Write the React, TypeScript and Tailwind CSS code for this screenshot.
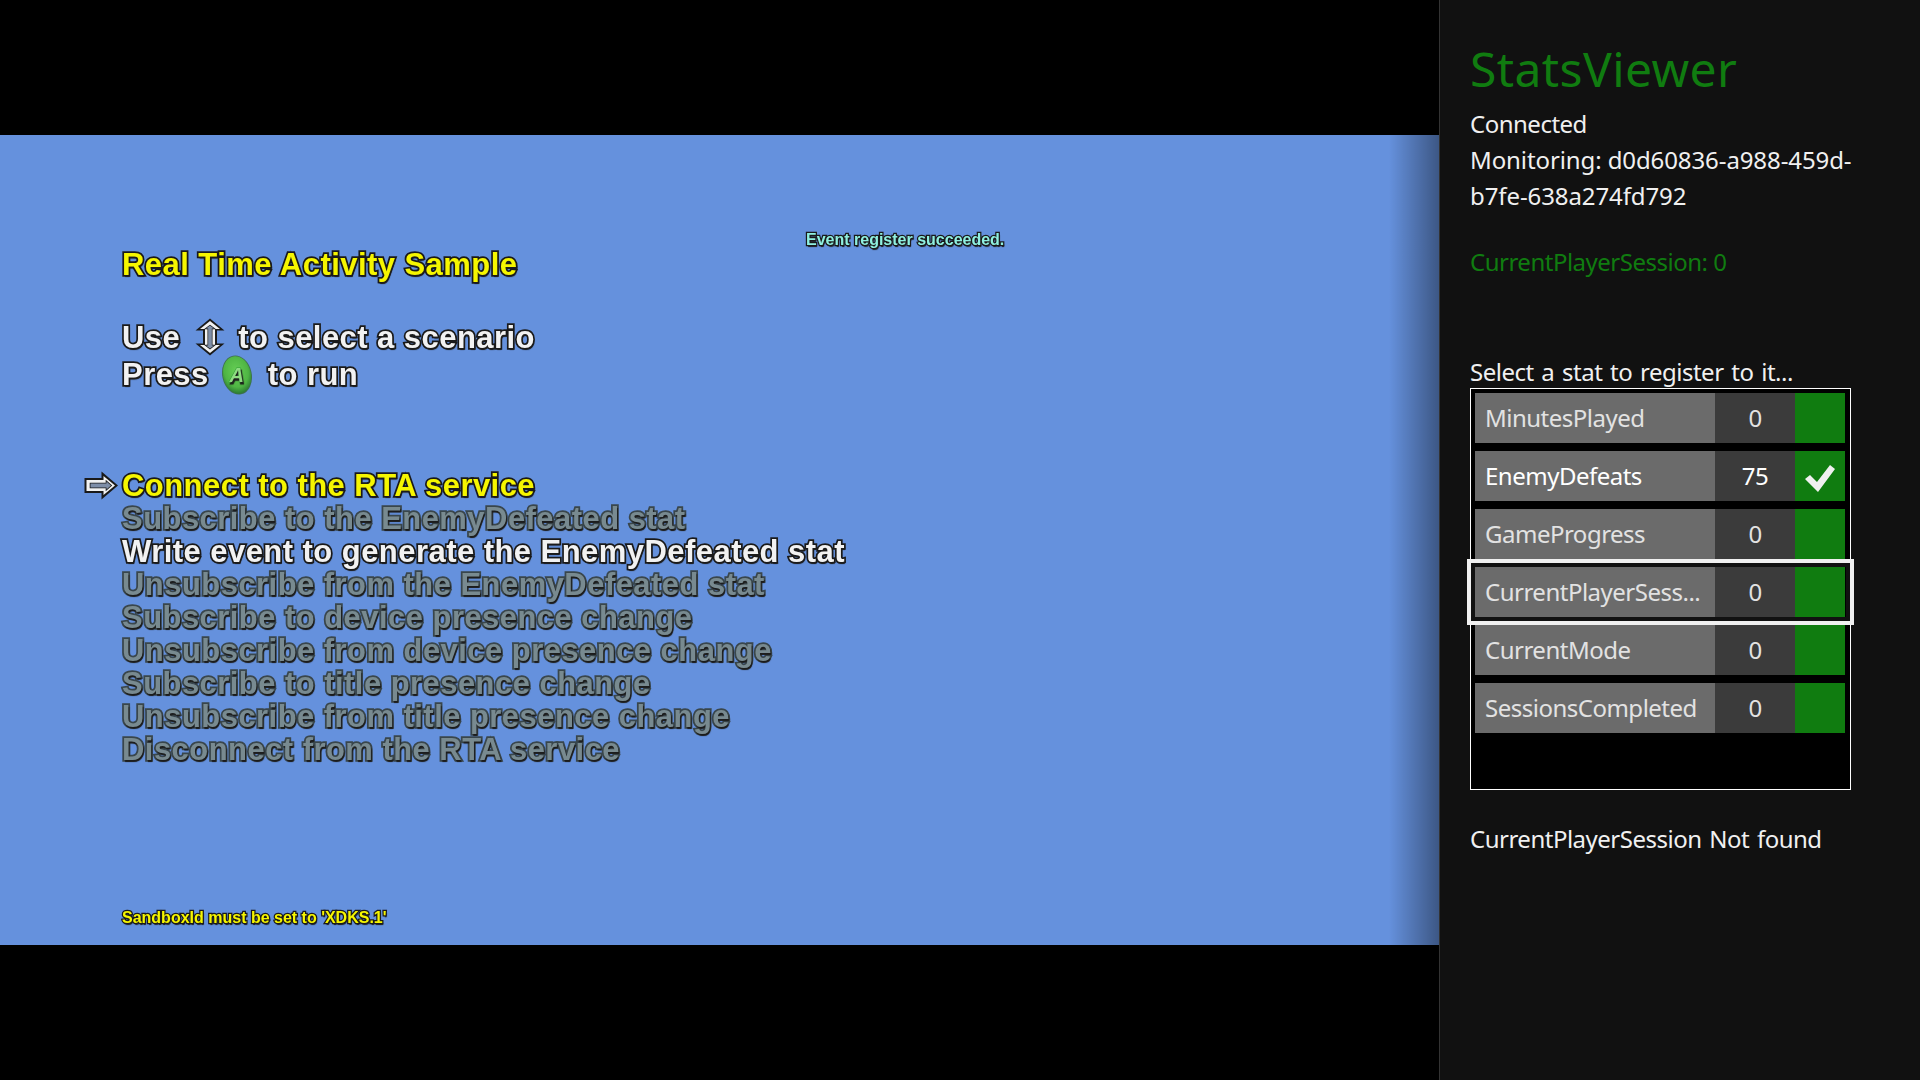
const outlined =
  "font-['Liberation_Sans',Arial,sans-serif] font-bold whitespace-nowrap tracking-[0.45px] [paint-order:stroke_fill] [text-shadow:1px_2px_1px_#1c1c1c]";
const bright = "[-webkit-text-stroke:3.5px_#1a1a1a]";
const dimmed = "text-[#788a90] [-webkit-text-stroke:3.5px_#39464c]";

const menuItems = [
  { label: "Connect to the RTA service", tone: `text-[#f6f600] ${bright} tracking-[0.6px]`, pointer: true },
  { label: "Subscribe to the EnemyDefeated stat", tone: dimmed },
  { label: "Write event to generate the EnemyDefeated stat", tone: `text-[#f2f2f2] ${bright}` },
  { label: "Unsubscribe from the EnemyDefeated stat", tone: dimmed },
  { label: "Subscribe to device presence change", tone: dimmed },
  { label: "Unsubscribe from device presence change", tone: dimmed },
  { label: "Subscribe to title presence change", tone: dimmed },
  { label: "Unsubscribe from title presence change", tone: dimmed },
  { label: "Disconnect from the RTA service", tone: dimmed },
];

const stats = [
  { name: "MinutesPlayed", value: "0" },
  { name: "EnemyDefeats", value: "75", registered: true },
  { name: "GameProgress", value: "0" },
  { name: "CurrentPlayerSess...", value: "0", focused: true },
  { name: "CurrentMode", value: "0" },
  { name: "SessionsCompleted", value: "0" },
];

const PointerArrow = () => (
  <svg width="35" height="29" viewBox="0 0 35 29" className="shrink-0">
    <path d="M0.5 7 H17.5 V0.5 L34 14.5 L17.5 28.5 V22 H0.5 Z" fill="#1a1a1a" />
    <path d="M2.5 9 H19.5 V5 L31 14.5 L19.5 24 V20 H2.5 Z" fill="#f2f2f2" />
    <path d="M6.5 12.5 H22.5 V10.5 L27 14.5 L22.5 18.5 V16.5 H6.5 Z" fill="#7e8ea8" stroke="#1a1a1a" strokeWidth="1.6" />
  </svg>
);

const UpDownArrow = () => (
  <svg width="30" height="38" viewBox="0 0 30 38" className="shrink-0">
    <path d="M15 0.5 L29.5 12.5 H22 V25.5 H29.5 L15 37.5 L0.5 25.5 H8 V12.5 H0.5 Z" fill="#1a1a1a" />
    <path d="M15 3 L25 11 H20 V27 H25 L15 35 L5 27 H10 V11 H5 Z" fill="#f2f2f2" />
    <path d="M15 7.5 L19 10.5 H16.8 V27.5 H19 L15 30.5 L11 27.5 H13.2 V10.5 H11 Z" fill="#7e8ea8" stroke="#1a1a1a" strokeWidth="1.4" />
  </svg>
);

const AButton = () => (
  <svg width="32" height="40" viewBox="0 0 32 40" className="shrink-0">
    <defs>
      <radialGradient id="a-button" cx="50%" cy="40%" r="60%">
        <stop offset="0%" stopColor="#66cf55" />
        <stop offset="70%" stopColor="#4fb544" />
        <stop offset="100%" stopColor="#2c7a32" />
      </radialGradient>
    </defs>
    <ellipse cx="16" cy="20" rx="14" ry="19" transform="rotate(-12 16 20)" fill="url(#a-button)" stroke="#3f6f52" strokeWidth="1.5" />
    <text x="16" y="27" textAnchor="middle" fontSize="20" fontStyle="italic" fontWeight="700" fill="#8fdc82" stroke="#2f9a37" strokeWidth="1" fontFamily="Liberation Sans">
      A
    </text>
  </svg>
);

const CheckMark = () => (
  <svg width="50" height="50" viewBox="0 0 50 50">
    <polygon points="10,28 15,24 22,31 35,14 40,18 23,41" fill="#f0f0f0" />
  </svg>
);

function GameView() {
  return (
    <div className="relative h-[810px] overflow-hidden bg-[#6591dd] pl-[122px] pt-[113px] text-[31px] leading-[33px] blur-[0.5px]">
      <div className={`${outlined} absolute left-[806px] top-[96px] text-[16px] leading-[18px] tracking-normal text-[#8ff0e0] [-webkit-text-stroke:2.5px_#1a1a1a]`}>
        Event register succeeded.
      </div>

      <div className={`${outlined} ${bright} tracking-[0.25px] text-[#f6f600]`}>Real Time Activity Sample</div>

      <div className={`${outlined} ${bright} mt-[38px] flex h-[37px] items-center text-[#f2f2f2]`}>
        <span>Use</span>
        <span className="ml-[15px] mr-[13px] -translate-y-px"><UpDownArrow /></span>
        <span>to select a scenario</span>
      </div>
      <div className={`${outlined} ${bright} flex h-[37px] items-center text-[#f2f2f2]`}>
        <span>Press</span>
        <span className="ml-[12px] mr-[15px]"><AButton /></span>
        <span>to run</span>
      </div>

      <div className="mt-[76px]">
        {menuItems.map((item) => (
          <div key={item.label} className={`${outlined} ${item.tone} relative`}>
            {item.pointer && (
              <span className="absolute left-[-38px] top-[2px]"><PointerArrow /></span>
            )}
            {item.label}
          </div>
        ))}
      </div>

      <div className={`${outlined} mt-[143px] text-[16px] leading-[18px] tracking-normal text-[#f6f600] [-webkit-text-stroke:2.5px_#1a1a1a]`}>
        SandboxId must be set to 'XDKS.1'
      </div>

      <div className="absolute inset-y-0 right-0 w-[50px] bg-gradient-to-r from-transparent to-black/40" />
    </div>
  );
}

function StatRow({ name, value, registered, focused }: { name: string; value: string; registered?: boolean; focused?: boolean }) {
  return (
    <div
      className={`flex h-[50px] text-[24px] ${registered ? "text-white" : "text-[#e2e2e2]"} ${
        focused ? "relative z-10 shadow-[0_0_0_4px_#111111,0_0_0_8px_#f0f0f0]" : ""
      }`}
    >
      <div className="flex w-[240px] items-center bg-[#6b6b6b] pb-[1px] pl-[10px] whitespace-nowrap">{name}</div>
      <div className="flex w-[80px] items-center justify-center bg-[#3b3b3b] pb-[1px]">{value}</div>
      <div className="flex w-[50px] items-center justify-center bg-[#107c10]">
        {registered && <CheckMark />}
      </div>
    </div>
  );
}

export default function App() {
  return (
    <div className="flex h-[1080px] w-[1920px] overflow-hidden bg-black font-['Noto_Sans','Open_Sans',sans-serif]">
      <div className="flex w-[1439px] flex-col justify-center">
        <GameView />
      </div>

      <aside className="w-[481px] border-l border-[#333333] bg-[#111111] pl-[30px] text-[24px] leading-[36px] tracking-[-0.5px] [word-spacing:2px] text-[#f0f0f0]">
        <h1 className="mt-[36px] text-[48px] leading-[66px] tracking-[0.4px] text-[#107c10]">StatsViewer</h1>
        <p className="mt-[4px]">Connected</p>
        <p className="w-[400px] tracking-[-0.1px] [word-spacing:0]">Monitoring: d0d60836-a988-459d-b7fe-638a274fd792</p>
        <p className="mt-[30px] text-[#107c10] [word-spacing:0]">CurrentPlayerSession: 0</p>

        <p className="mt-[74px]">Select a stat to register to it...</p>
        <div className="-mt-[2px] h-[402px] w-[381px] border border-white bg-black p-[4px]">
          <div className="flex flex-col gap-[8px] [word-spacing:0]">
            {stats.map((stat) => (
              <StatRow key={stat.name} {...stat} />
            ))}
          </div>
        </div>
        <p className="mt-[31px]">CurrentPlayerSession Not found</p>
      </aside>
    </div>
  );
}
